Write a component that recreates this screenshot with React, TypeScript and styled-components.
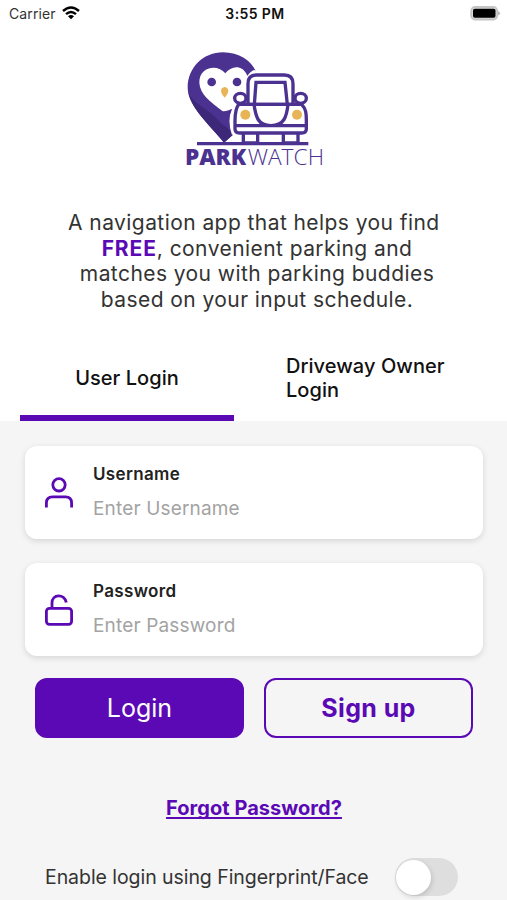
import React, { useState } from "react";
import styled, { createGlobalStyle } from "styled-components";

const purple = "#5b09b5";
const logoPurple = "#4b3190";

const GlobalStyle = createGlobalStyle`
  * { box-sizing: border-box; }
  body { margin: 0; background: #f5f5f5; font-family: Inter, "Liberation Sans", sans-serif; }
  button, input { font-family: inherit; }
`;

const Screen = styled.main`
  width: 507px;
  height: 900px;
  overflow: hidden;
  background: #f5f5f5;
  display: flex;
  flex-direction: column;
`;

const Header = styled.header`
  background: #fff;
  height: 421px;
  flex: none;
  display: flex;
  flex-direction: column;
  align-items: center;
`;

const StatusBar = styled.div`
  width: 100%;
  height: 28px;
  padding: 0 6px 0 9px;
  display: grid;
  grid-template-columns: 1fr auto 1fr;
  align-items: center;
  color: #111;
`;

const Carrier = styled.div`
  display: flex;
  align-items: center;
  gap: 6px;
  font-size: 14px;
  letter-spacing: 0.1px;
  line-height: 17px;
  margin-top: -2px;
  color: #333;
`;

const Clock = styled.div`
  margin-top: -1px;
  font-size: 14px;
  font-weight: 600;
  letter-spacing: 0.4px;
`;

const Battery = styled.svg`
  justify-self: end;
  margin-top: -2px;
`;

const Logo = styled.svg`
  display: block;
  margin-top: 12px;
`;

const Description = styled.div`
  margin-top: 35px;
  padding-left: 7px;
  height: 104px;
  display: flex;
  flex-direction: column;
  align-items: center;
  color: #333;
  font-size: 21px;
  line-height: 25.7px;
  letter-spacing: 0.43px;
  white-space: nowrap;
`;

const Free = styled.strong`
  color: ${purple};
  font-weight: 700;
  letter-spacing: 0.9px;
`;

const Tabs = styled.nav`
  width: 100%;
  flex: 1;
  padding: 0 0 0 20px;
  margin-top: 23px;
  display: flex;
  justify-content: space-between;
`;

const Tab = styled.button<{ $active?: boolean }>`
  width: ${(p) => (p.$active ? 214 : 221)}px;
  padding: 4px 0 0;
  border: 0;
  border-bottom: 6px solid ${(p) => (p.$active ? purple : "transparent")};
  background: none;
  display: flex;
  align-items: center;
  justify-content: ${(p) => (p.$active ? "center" : "flex-start")};
  text-align: left;
  color: #111;
  font-size: 20px;
  font-weight: 500;
  line-height: 24.5px;
  letter-spacing: 0.05px;
`;

const Form = styled.form`
  padding: 25px 24px 0 25px;
  display: flex;
  flex-direction: column;
`;

const Field = styled.label`
  height: 93px;
  margin-bottom: 24px;
  padding: 0 20px;
  border-radius: 12px;
  background: #fff;
  box-shadow: 0 2px 6px rgba(0, 0, 0, 0.13);
  display: flex;
  align-items: center;
  gap: 20px;
`;

const FieldIcon = styled.svg`
  width: 28px;
  height: 32px;
  flex: none;
  fill: none;
  stroke: ${purple};
  stroke-width: 2.8;
`;

const FieldBody = styled.div`
  flex: 1;
  display: flex;
  flex-direction: column;
  gap: 10px;
  margin-top: -2px;
`;

const FieldLabel = styled.span`
  color: #222;
  font-size: 17px;
  font-weight: 600;
  line-height: 24px;
  letter-spacing: 0.35px;
`;

const Input = styled.input`
  width: 100%;
  height: 26px;
  padding: 0;
  border: 0;
  outline: none;
  background: transparent;
  font-size: 19px;
  letter-spacing: 0.16px;
  &::placeholder { color: #a3a3a3; opacity: 1; }
`;

const Actions = styled.div`
  display: flex;
  gap: 20px;
  padding: 0 10px;
  margin-top: -2px;
`;

const Button = styled.button<{ $outline?: boolean }>`
  width: 209px;
  flex: none;
  height: 60px;
  padding: 0;
  border: 2px solid ${purple};
  border-radius: 12px;
  background: ${(p) => (p.$outline ? "transparent" : purple)};
  color: ${(p) => (p.$outline ? purple : "#fff")};
  font-size: 25px;
  font-weight: ${(p) => (p.$outline ? 700 : 400)};
  letter-spacing: ${(p) => (p.$outline ? 0.4 : 0)}px;
`;

const Forgot = styled.a`
  align-self: center;
  margin-top: 57px;
  height: 26px;
  color: ${purple};
  font-size: 20px;
  font-weight: 700;
  line-height: 26px;
  letter-spacing: 0.04px;
  text-decoration: underline;
  text-decoration-thickness: 2px;
  text-underline-offset: 2px;
  text-decoration-skip-ink: none;
`;

const Biometric = styled.div`
  margin-top: 36px;
  padding: 0 25px 0 20px;
  height: 40px;
  display: flex;
  align-items: center;
  justify-content: space-between;
  color: #333;
  font-size: 19.5px;
  letter-spacing: -0.06px;
  white-space: nowrap;
`;

const Toggle = styled.button<{ $on: boolean }>`
  width: 63px;
  height: 38px;
  padding: 1px;
  border: 0;
  border-radius: 20px;
  background: ${(p) => (p.$on ? purple : "#dedede")};
  display: flex;
  align-items: center;
  justify-content: ${(p) => (p.$on ? "flex-end" : "flex-start")};
`;

const Knob = styled.span`
  width: 35px;
  height: 35px;
  border-radius: 50%;
  background: #fff;
  box-shadow: 1px 2px 5px rgba(0, 0, 0, 0.15);
`;

function ParkWatchLogo() {
  return (
    <Logo width="167" height="135" viewBox="0 0 501 405" fill="none">
      <path d="M162 308C119 254 53 198 53 143C53 82 101 37 159 37C207 37 244 62 257 93L225 111L190 170L184 230L188 285Z" fill={logoPurple} />
      <path d="M55 157C66 190 121 211 144 240C161 262 167 251 188 285L162 308C124 260 64 209 55 157Z" fill="#3c2778" />
      <path d="M166 100C144 71 87 79 88 128C89 162 123 187 157 213C163 216 174 212 190 205V160L231 154V105C215 72 183 78 166 100Z" fill="#fff" />
      <circle cx="125" cy="126" r="13" fill={logoPurple} />
      <circle cx="201" cy="126" r="13" fill={logoPurple} />
      <path d="M154 147Q164 135 174 147Q178 158 164 173Q150 159 154 147Z" fill="#e9b457" />
      <path d="M257 94C239 98 229 112 228 151C205 147 188 158 187 177C190 188 194 194 190 210C180 231 182 259 190 283" stroke="#fff" strokeWidth="9" />
      <path d="M81 311H415" stroke={logoPurple} strokeWidth="10" />
      <g stroke={logoPurple} strokeWidth="10" fill="#fff">
        <path d="M220 280V309H263V280M340 280V309H384V280" />
        <ellipse cx="211" cy="175" rx="17" ry="15" />
        <ellipse cx="392" cy="175" rx="17" ry="15" />
        <path d="M234 194V131Q234 105 259 105H343Q369 105 369 131V194" />
        <path d="M253 194L258 127H345L352 194" />
        <path d="M206 193C195 208 195 225 195 243V267Q195 279 209 279H395Q409 279 409 267V240C409 220 408 207 395 193Z" />
        <path d="M252 193C257 229 263 257 303 257C343 257 350 229 354 193M196 257H408" />
        <path d="M206 193H396" />
      </g>
      <circle cx="226" cy="224" r="15" fill="#e9b457" />
      <circle cx="381" cy="224" r="15" fill="#e9b457" />
      <text x="45" y="375" textLength="184" lengthAdjust="spacingAndGlyphs" fill={logoPurple} fontFamily="Open Sans" fontSize="66" fontWeight="800">PARK</text>
      <text x="233" y="375" textLength="229" lengthAdjust="spacingAndGlyphs" fill={logoPurple} fontFamily="Open Sans" fontSize="66" fontWeight="300">WATCH</text>
    </Logo>
  );
}

export default function App() {
  const [biometric, setBiometric] = useState(false);
  return (
    <>
      <GlobalStyle />
      <Screen>
        <Header>
          <StatusBar>
            <Carrier>
              Carrier
              <svg width="18" height="14" viewBox="0 0 18 14" fill="none" stroke="#000" strokeWidth="2.4">
                <path d="M1 5Q9-2 17 5M4 8.2Q9 3.8 14 8.2" />
                <path d="M6 10.3Q9 7.8 12 10.3L9 13.3Z" fill="#000" stroke="none" />
              </svg>
            </Carrier>
            <Clock>3:55 PM</Clock>
            <Battery width="31" height="15" viewBox="0 0 31 15">
              <rect x="1.2" y="1" width="26" height="12.5" rx="4" fill="#ddd" stroke="#c4c4c4" strokeWidth="1.8" />
              <rect x="3" y="2.8" width="22.5" height="9" rx="1.8" fill="#000" />
              <path d="M28 5Q32 7.2 28 9.5Z" fill="#b9b9b9" />
            </Battery>
          </StatusBar>
          <ParkWatchLogo />
          <Description>
            <span>A navigation app that helps you find&nbsp;</span>
            <span><Free>FREE</Free>, convenient parking and</span>
            <span>matches you with parking buddies</span>
            <span>based on your input schedule.</span>
          </Description>
          <Tabs>
            <Tab $active>User Login</Tab>
            <Tab>Driveway Owner<br />Login</Tab>
          </Tabs>
        </Header>
        <Form onSubmit={(e) => e.preventDefault()}>
          <Field>
            <FieldIcon viewBox="0 0 28 32">
              <circle cx="14" cy="7.8" r="6.2" />
              <path d="M1.4 30.5V26Q1.4 19.9 7.5 19.9H20.5Q26.6 19.9 26.6 26V30.5" />
            </FieldIcon>
            <FieldBody>
              <FieldLabel>Username</FieldLabel>
              <Input placeholder="Enter Username" />
            </FieldBody>
          </Field>
          <Field>
            <FieldIcon viewBox="0 0 28 32">
              <rect x="1.4" y="14.3" width="25.2" height="16" rx="3" />
              <path d="M7 14V9C7 -0.5 19.5 -0.5 21.3 8.5" />
            </FieldIcon>
            <FieldBody>
              <FieldLabel>Password</FieldLabel>
              <Input type="password" placeholder="Enter Password" />
            </FieldBody>
          </Field>
          <Actions>
            <Button type="submit">Login</Button>
            <Button type="button" $outline>Sign up</Button>
          </Actions>
          <Forgot href="#">Forgot Password?</Forgot>
          <Biometric>
            <span>Enable login using Fingerprint/Face</span>
            <Toggle type="button" role="switch" aria-checked={biometric} $on={biometric} onClick={() => setBiometric(!biometric)}>
              <Knob />
            </Toggle>
          </Biometric>
        </Form>
      </Screen>
    </>
  );
}
